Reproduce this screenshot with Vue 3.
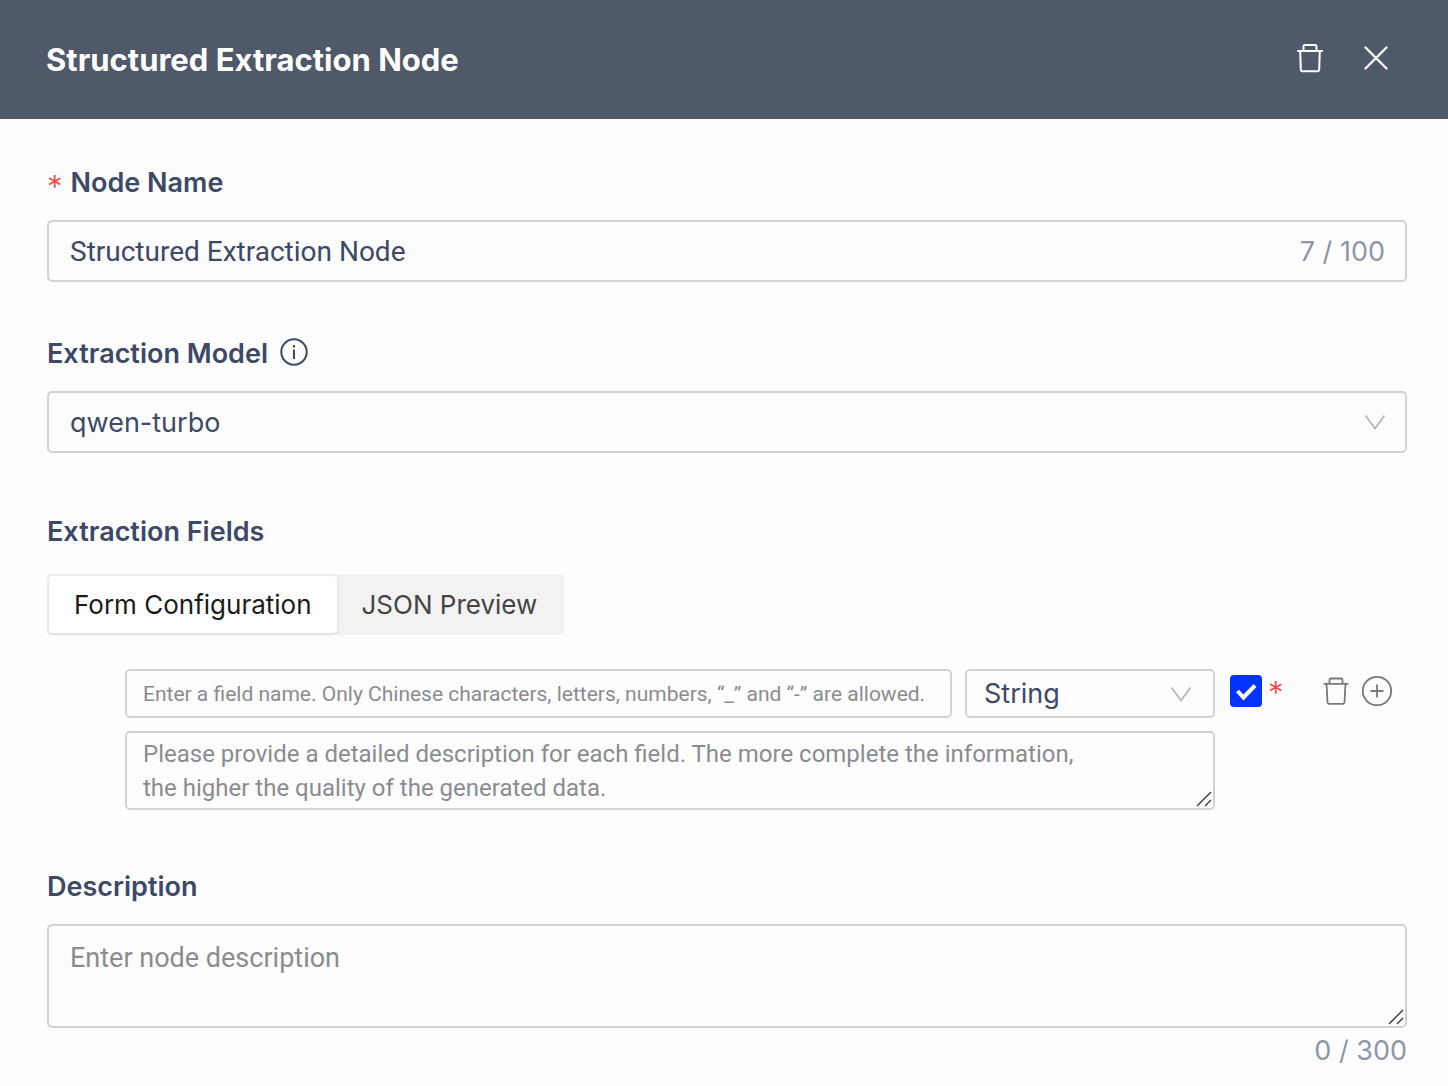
<script setup>
import { ref } from 'vue'

const nodeName = ref('Structured Extraction Node')
const model = ref('qwen-turbo')
const view = ref('form')
const fieldName = ref('')
const fieldType = ref('String')
const fieldRequired = ref(true)
const fieldDescription = ref('')
const description = ref('')
const tabs = [
  { id: 'form', label: 'Form Configuration' },
  { id: 'json', label: 'JSON Preview' },
]
</script>

<template>
  <section class="panel">
    <header class="header">
      <h1 class="title">Structured Extraction Node</h1>
      <div class="header-actions">
        <button type="button" class="icon-button" aria-label="Delete node">
          <svg width="28" height="30" viewBox="0 0 28 30" fill="none" stroke="currentColor" stroke-width="2" stroke-linecap="round" stroke-linejoin="round">
            <path d="M2 8h24M7.500 7.500V3.500Q7.500 2 9 2h10Q20.500 2 20.500 3.500V7.500M4.200 8l.6 18.500q.1 1.800 1.800 1.800h14.800q1.700 0 1.800-1.800L23.800 8" />
          </svg>
        </button>
        <button type="button" class="icon-button" aria-label="Close">
          <svg width="28" height="28" viewBox="0 0 28 28" fill="none" stroke="currentColor" stroke-width="2.400" stroke-linecap="round">
            <path d="M3.500 3.500l21 21M24.500 3.500l-21 21" />
          </svg>
        </button>
      </div>
    </header>

    <form class="form" @submit.prevent>
      <div class="group">
        <label class="label" for="node-name"><span class="star">*</span>Node Name</label>
        <div class="control text-control">
          <input id="node-name" v-model="nodeName" class="bare" type="text" />
          <span class="count">7 / 100</span>
        </div>
      </div>

      <div class="group">
        <div class="label-row">
          <label class="label" for="model">Extraction Model</label>
          <svg class="info" width="28" height="28" viewBox="0 0 28 28" fill="none" stroke="currentColor" stroke-width="2">
            <circle cx="14" cy="14" r="12.700" />
            <path d="M14 11.500v9.500M14 7v2.500" />
          </svg>
        </div>
        <div class="select-wrap">
          <select id="model" v-model="model" class="control select">
            <option>qwen-turbo</option>
          </select>
          <svg class="chevron" width="22" height="16" viewBox="0 0 22 16" fill="none" stroke="currentColor" stroke-width="1.700">
            <path d="M1.500 1.500L11 14.500L20.500 1.500" />
          </svg>
        </div>
      </div>

      <div class="group fields">
        <h2 class="label">Extraction Fields</h2>
        <div class="tabs" role="tablist">
          <button
            v-for="tab in tabs"
            :key="tab.id"
            type="button"
            role="tab"
            class="tab"
            :class="{ active: view === tab.id }"
            :aria-selected="view === tab.id"
            @click="view = tab.id"
          >{{ tab.label }}</button>
        </div>
        <div class="field">
          <div class="field-inputs">
            <div class="field-top">
              <input v-model="fieldName" class="control field-name" type="text" aria-label="Field name" placeholder="Enter a field name. Only Chinese characters, letters, numbers, “_” and “-” are allowed." />
              <div class="select-wrap type-wrap">
                <select v-model="fieldType" class="control select type" aria-label="Field type">
                  <option>String</option>
                </select>
                <svg class="chevron" width="22" height="16" viewBox="0 0 22 16" fill="none" stroke="currentColor" stroke-width="1.700">
                  <path d="M1.500 1.500L11 14.500L20.500 1.500" />
                </svg>
              </div>
            </div>
            <div class="area-wrap">
              <textarea v-model="fieldDescription" class="control field-area" aria-label="Field description" placeholder="Please provide a detailed description for each field. The more complete the information, the higher the quality of the generated data."></textarea>
              <svg class="grip" width="16" height="16" viewBox="0 0 16 16" stroke="currentColor" stroke-width="1.500">
                <path d="M1 15L15 1M9 15L15 9" />
              </svg>
            </div>
          </div>
          <div class="field-actions">
            <label class="required">
              <input v-model="fieldRequired" class="check" type="checkbox" aria-label="Required" />
              <svg class="tick" width="32" height="32" viewBox="0 0 32 32" fill="none" stroke="currentColor" stroke-width="4">
                <path d="M7.500 16l6 6.500L25 10.500" />
              </svg>
              <span class="star">*</span>
            </label>
            <div class="row-buttons">
              <button type="button" class="icon-button" aria-label="Delete field">
                <svg width="26" height="28" viewBox="0 0 26 28" fill="none" stroke="currentColor" stroke-width="1.800" stroke-linecap="round" stroke-linejoin="round">
                  <path d="M1.200 6.800h23.600M6.500 6.500V3Q6.500 1.500 8 1.500h10Q19.500 1.500 19.500 3V6.500M3.500 6.800l1 18.200q.1 1.800 1.500 1.800h14q1.400 0 1.500-1.800L22.500 6.800" />
                </svg>
              </button>
              <button type="button" class="icon-button" aria-label="Add field">
                <svg width="32" height="32" viewBox="0 0 32 32" fill="none" stroke="currentColor" stroke-width="1.800">
                  <circle cx="16" cy="16" r="14.200" />
                  <path d="M16 9.500v13M9.500 16h13" />
                </svg>
              </button>
            </div>
          </div>
        </div>
      </div>

      <div class="group">
        <label class="label" for="description">Description</label>
        <div class="area-wrap">
          <textarea id="description" v-model="description" class="control area" placeholder="Enter node description"></textarea>
          <svg class="grip" width="16" height="16" viewBox="0 0 16 16" stroke="currentColor" stroke-width="1.500">
            <path d="M1 15L15 1M9 15L15 9" />
          </svg>
        </div>
        <span class="count total">0 / 300</span>
      </div>
    </form>
  </section>
</template>

<style>
body {
  margin: 0;
  background: #fdfdfd;
}
</style>

<style scoped>
.panel,
.panel * {
  box-sizing: border-box;
}
.panel {
  font-family: Roboto, "Liberation Sans", sans-serif;
  font-size: 28px;
  color: #3d4966;
}
.header {
  display: flex;
  align-items: center;
  justify-content: space-between;
  height: 119px;
  padding: 0 58px 0 46px;
  background: #4f5969;
  color: #fff;
}
.title {
  margin: 0;
  font-family: Inter, "Liberation Sans", sans-serif;
  font-size: 31px;
  font-weight: 700;
}
.header-actions {
  display: flex;
  align-items: center;
  gap: 38px;
  padding-bottom: 3px;
}
.icon-button {
  display: flex;
  padding: 0;
  border: 0;
  background: none;
  color: inherit;
  cursor: pointer;
}
.form {
  display: flex;
  flex-direction: column;
  gap: 54px;
  padding: 46px 41px 18px 47px;
}
.group {
  display: flex;
  flex-direction: column;
}
.label {
  display: flex;
  margin: 0 0 19px;
  font-family: Inter, "Liberation Sans", sans-serif;
  font-size: 27px;
  font-weight: 600;
  line-height: 36px;
}
.label-row {
  display: flex;
  gap: 12px;
}
.info {
  margin-top: 2px;
}
.star {
  height: 36px;
  margin-right: 8px;
  padding-top: 4px;
  color: #ff4040;
  font-family: Inter, "Liberation Sans", sans-serif;
  font-size: 31px;
  font-weight: 300;
  line-height: 36px;
}
.control {
  width: 100%;
  border: 2px solid #d2d2d4;
  border-radius: 5px;
  background: transparent;
  color: inherit;
  font: inherit;
  outline: none;
}
.control::placeholder {
  color: #8b8c90;
  opacity: 1;
}
.text-control {
  display: flex;
  align-items: center;
  height: 62px;
  padding: 0 20px 0 21px;
}
.bare {
  flex: 1;
  min-width: 0;
  padding: 0;
  border: 0;
  outline: none;
  background: none;
  color: inherit;
  font: inherit;
}
.count {
  color: #8e95a9;
  font-family: Inter, "Liberation Sans", sans-serif;
  font-size: 27px;
}
.select-wrap {
  position: relative;
  display: flex;
}
.select {
  height: 62px;
  padding: 0 60px 0 21px;
  font-family: Inter, "Liberation Sans", sans-serif;
  font-size: 27px;
  appearance: none;
}
.chevron {
  position: absolute;
  top: 50%;
  right: 21px;
  margin-top: -8px;
  color: #b4b4b6;
  pointer-events: none;
}
.type-wrap .chevron {
  right: 23px;
}
.fields {
  margin: 7px 0 5px;
}
.fields .label {
  margin-bottom: 24px;
}
.tabs {
  display: flex;
  align-self: flex-start;
  height: 61px;
  padding: 2px;
  border-radius: 4px;
  background: #f2f2f2;
}
.tab {
  padding: 0 25px;
  border: 0;
  border-radius: 4px;
  background: none;
  color: #444;
  font-family: Inter, "Liberation Sans", sans-serif;
  font-size: 26px;
  cursor: pointer;
}
.tab.active {
  background: #fff;
  color: #1a1a1a;
  box-shadow: 0 1px 4px rgba(0, 0, 0, 0.12);
}
.field {
  display: flex;
  gap: 15px;
  margin-top: 34px;
  padding-left: 78px;
}
.field-inputs {
  display: flex;
  flex: 1;
  flex-direction: column;
  gap: 13px;
}
.field-top {
  display: flex;
  gap: 13px;
}
.field-name {
  flex: 1;
  min-width: 0;
  height: 49px;
  padding: 0 16px;
  font-size: 21px;
}
.type-wrap {
  width: 250px;
}
.type {
  height: 49px;
  padding: 0 50px 0 17px;
}
.area-wrap {
  position: relative;
  display: flex;
}
.field-area {
  height: 79px;
  padding: 4px 120px 0 16px;
  font-size: 24px;
  line-height: 34px;
  resize: none;
}
.area {
  height: 104px;
  padding: 14px 21px;
  font-size: 27px;
  line-height: 36px;
  resize: none;
}
.grip {
  position: absolute;
  right: 3px;
  bottom: 3px;
  color: #444;
}
.field-actions {
  display: flex;
  justify-content: space-between;
  width: 177px;
  padding-right: 14px;
}
.required {
  position: relative;
  display: flex;
  gap: 6px;
  height: 32px;
  margin-top: 6px;
}
.required .star {
  margin: 0;
  padding: 0;
}
.check {
  width: 32px;
  height: 32px;
  margin: 0;
  border: 2px solid #d2d2d4;
  border-radius: 4px;
  appearance: none;
}
.check:checked {
  border-color: #0433ff;
  background: #0433ff;
}
.tick {
  position: absolute;
  top: 0;
  left: 0;
  color: #fff;
  pointer-events: none;
}
.row-buttons {
  display: flex;
  align-items: center;
  gap: 12px;
  height: 43px;
  color: #77787a;
}
.total {
  align-self: flex-end;
  margin-top: 5px;
  line-height: 36px;
}
</style>
